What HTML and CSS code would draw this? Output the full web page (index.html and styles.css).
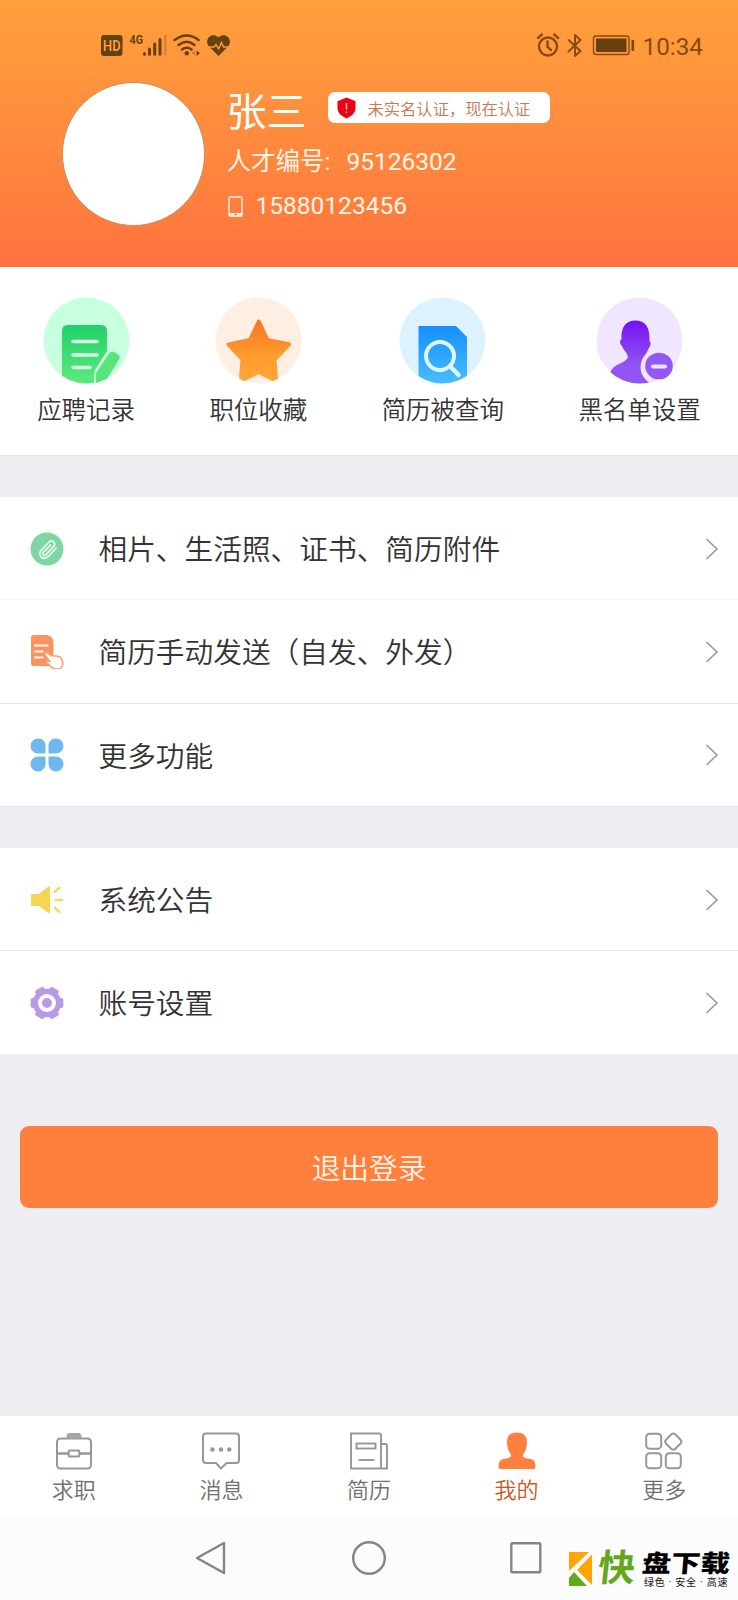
FILE: index.html
```html
<!DOCTYPE html>
<html lang="zh-CN">
<head>
<meta charset="utf-8">
<title>我的</title>
<link rel="stylesheet" href="styles.css">
</head>
<body>
<div class="screen">
  <header class="header">
    <div class="status">
      <svg class="status-left" width="134" height="28" viewBox="98 31 134 28">
        <rect x="101" y="35" width="21.5" height="21" rx="3" fill="#66400f"/>
        <text x="111.8" y="50.5" class="svg-hd" text-anchor="middle" textLength="17.500" lengthAdjust="spacingAndGlyphs">HD</text>
        <text x="129.5" y="43.5" class="svg-4g" textLength="13.5" lengthAdjust="spacingAndGlyphs">4G</text>
        <g stroke="#6b3f0e" stroke-width="3" stroke-linecap="round">
          <path d="M144.5 53.5v.8M149.5 49v5.3M154.7 44v10.3M160 39.5v14.8"/>
          <path d="M165.3 36v18.3" opacity=".25" stroke-width="2.5"/>
        </g>
        <g fill="none" stroke="#6b3f0e" stroke-width="2.5" stroke-linecap="round">
          <path d="M174.5 40Q187 31 198.500 40M178.500 45Q187 38.500 194.500 45M182 49.500Q187 46 191.500 49.500"/>
        </g>
        <circle cx="186.800" cy="53.300" r="2.300" fill="#6b3f0e"/>
        <path d="M196.500 50.500l3.500 2.500-3.500 3z" fill="#6b3f0e"/><path d="M195 50.500l-3.500 2.500 3.500 3z" fill="#6b3f0e" opacity=".3"/>
        <path d="M218.500 56l-10-10C203.500 38 213 32 218.500 37.500C224 32 233.500 38 228.500 46z" fill="#66400f"/>
        <path d="M207 47h7l2-2.500 2.500 4.500 3-6.500 2 4.500h6" fill="none" stroke="#ff9a3b" stroke-width="1.400"/>
      </svg>
      <div class="status-right">
        <svg width="100" height="28" viewBox="537 31 100 28">
          <g fill="none" stroke="#8a4a0c" stroke-width="2.400" stroke-linecap="round">
            <circle cx="549" cy="46.500" r="9"/><path d="M548.500 41.500v5.500l3.500 3M539 38l4-3.500M559.200 38l-4-3.500"/>
            <path d="M569.500 40l12 11-5.500 5V35l5.500 5-12 11.500" stroke-width="2" stroke-linejoin="round"/>
          </g>
          <rect x="594.500" y="36" width="35.500" height="18.500" rx="2.500" fill="none" stroke="#8a4a0c" stroke-width="1.400"/>
          <rect x="597" y="38.500" width="30.500" height="13.500" fill="#66400f"/>
          <rect x="632.500" y="40" width="2.600" height="11" rx="1" fill="#7a430c"/>
        </svg>
        <span class="time">10:34</span>
      </div>
    </div>
    <div class="profile">
      <div class="avatar"></div>
      <div class="info">
        <div class="name-line">
          <span class="name">张三</span>
          <div class="badge">
            <svg width="19" height="22" viewBox="0 0 19 22"><path d="M9.500.5l9 3.700v7.300q0 6-9 10Q.5 17.500.5 11.500V4.200z" fill="#ee0010"/><path d="M9.500 6v6.500M9.500 14.500v1.500" stroke="#ffc4bd" stroke-width="1.400"/></svg>
            <span>未实名认证，现在认证</span>
          </div>
        </div>
        <div class="line id"><span>人才编号:</span><span>95126302</span></div>
        <div class="line phone">
          <svg width="15" height="21" viewBox="0 0 15 21"><rect x="1" y="1" width="13" height="19" rx="1" fill="none" stroke="#fff3dc" stroke-width="1.400"/><path d="M1 17h13v3.500H1z" fill="#fff3dc"/><path d="M6 18.600h3" stroke="#ff7b3d" stroke-width="1.200"/></svg>
          <span>15880123456</span>
        </div>
      </div>
    </div>
  </header>

  <nav class="quick">
    <a class="quick-item">
      <svg width="87" height="87" viewBox="0 0 87 87">
        <defs>
          <linearGradient id="g1" x1="0" y1="0" x2="0" y2="1"><stop stop-color="#22d06b"/><stop offset="1" stop-color="#5eea7c"/></linearGradient>
          <clipPath id="cc"><circle cx="43.500" cy="43.500" r="43"/></clipPath>
        </defs>
        <circle cx="43.500" cy="43.500" r="43" fill="#c8ffdf"/>
        <g clip-path="url(#cc)">
          <path d="M25 28H58q6 0 6 6V54L52 73q-1 2-1 14H19V34q0-6 6-6z" fill="url(#g1)"/>
          <path d="M30 44.500H54M30 58H54M30 70.500H47" stroke="#d3ffe2" stroke-width="3.500" stroke-linecap="round"/>
        </g>
        <path d="M66.500 56q2-2.500 4.500-1l4.500 3q2 1.500.8 4L64 82l-11 4V76z" fill="#59e37c"/>
      </svg>
      <span>应聘记录</span>
    </a>
    <a class="quick-item">
      <svg width="87" height="87" viewBox="0 0 87 87">
        <defs><linearGradient id="g2" gradientUnits="userSpaceOnUse" x1="0" y1="23" x2="0" y2="84"><stop stop-color="#f67524"/><stop offset=".6" stop-color="#ff9d2c"/><stop offset="1" stop-color="#ffa43a"/></linearGradient></defs>
        <circle cx="43.500" cy="43.500" r="43" fill="#ffeee2"/>
        <path d="M43.800 24.500l8.700 18.500 21.500 4.300-14.500 15.200 1.500 18-3.500 1.500-13.700-7-14.300 7-3.500-2L27.500 62.500 13.500 47.500 35 43z" fill="url(#g2)" stroke="url(#g2)" stroke-width="4" stroke-linejoin="round"/>
      </svg>
      <span>职位收藏</span>
    </a>
    <a class="quick-item">
      <svg width="87" height="87" viewBox="0 0 87 87">
        <defs><linearGradient id="g3" x1="0" y1="0" x2="0" y2="1"><stop stop-color="#168efc"/><stop offset="1" stop-color="#48beff"/></linearGradient></defs>
        <circle cx="43.500" cy="43.500" r="43" fill="#dcf3ff"/>
        <g clip-path="url(#cc)">
          <path d="M19.500 29H57l11 11V87H19.500z" fill="url(#g3)"/>
          <circle cx="41" cy="59" r="14" fill="none" stroke="#e0f6ff" stroke-width="4"/>
          <path d="M51 69l8.500 9" stroke="#e0f6ff" stroke-width="4.500" stroke-linecap="round"/>
        </g>
      </svg>
      <span>简历被查询</span>
    </a>
    <a class="quick-item">
      <svg width="87" height="87" viewBox="0 0 87 87">
        <defs><linearGradient id="g4" x1="0" y1="0" x2="0" y2="1"><stop stop-color="#7612f5"/><stop offset=".7" stop-color="#9155f2"/></linearGradient></defs>
        <circle cx="43.500" cy="43.500" r="43" fill="#f0e6ff"/>
        <g clip-path="url(#cc)">
          <path d="M39.500 23.500C50 23.500 54 31 53.500 44Q56 46 53 51Q50 56 50 59Q50 64 60 67L58 88H24L14 77Q15 70 24 66.500Q32 63 32 59.500Q31 56 28 53L26.500 50Q22 45 25.500 42C25 31 29 23.500 39.500 23.500z" fill="url(#g4)"/>
          <circle cx="63" cy="70" r="18.500" fill="#f0e6ff"/>
        </g>
        <ellipse cx="63" cy="69" rx="13.800" ry="13.300" fill="#9158f3"/><path d="M57 69.500H69" stroke="#eee2ff" stroke-width="4.200" stroke-linecap="round"/>
      </svg>
      <span>黑名单设置</span>
    </a>
  </nav>

  <section class="menu">
    <a class="row faint">
      <svg class="row-icon" viewBox="0 0 34 34"><circle cx="17" cy="17" r="16.500" fill="#7fd6a5"/><path d="M26 16l-7.500 8.500q-4 3.500-7.500.5-3-3.500.5-7l7.500-8q2.500-2 4.700 0 2 2.300-.2 4.700l-7.500 8q-1.500 1.300-2.700.2-1.200-1.300.2-2.700l7-7.200" fill="none" stroke="#e4f8ec" stroke-width="1.800" stroke-linecap="round" stroke-linejoin="round"/></svg>
      <span class="row-text">相片、生活照、证书、简历附件</span>
      <svg class="chevron" viewBox="0 0 14 24"><path d="M1.500 2l10.500 10-10.500 10"/></svg>
    </a>
    <a class="row">
      <svg class="row-icon" viewBox="0 0 34 34"><path d="M3.500 0H17q6.500 1 6.500 8V29q0 2-2 2H3.500Q1 31 1 28.500V2.500Q1 0 3.500 0z" fill="#fb935f"/><path d="M5 10.500H17.500M5 16.500H12.500M5 22.500H12.500" stroke="#fff" stroke-width="2.200" stroke-linecap="round"/><path d="M17 17.500l4.500 3.500q1.500-1 3 .3 1.700-1.200 3.200.4 2-.6 3.200 1.300 2 3 2 6-.5 4.500-4.900 5-5 .3-7.500-2.500-1.300-2.300-3-3-2-1.500-.5-2.700l3 .7-5-6.500q-.5-2.500 2-2.500z" fill="#fff" stroke="#fb9f70" stroke-width="1.500" stroke-linejoin="round"/></svg>
      <span class="row-text">简历手动发送（自发、外发）</span>
      <svg class="chevron" viewBox="0 0 14 24"><path d="M1.500 2l10.500 10-10.500 10"/></svg>
    </a>
    <a class="row">
      <svg class="row-icon" viewBox="0 0 34 34" fill="#6fb7ed"><path d="M8 .5Q15.500.5 15.500 8V15.500H8A7.500 7.500 0 0 1 8 .5zM26 .5A7.500 7.500 0 0 1 26 15.500H18.500V8Q18.500.5 26 .5zM8 18.500H15.500V26A7.500 7.500 0 1 1 8 18.500zM18.500 18.500H26A7.500 7.500 0 1 1 18.500 26z"/></svg>
      <span class="row-text">更多功能</span>
      <svg class="chevron" viewBox="0 0 14 24"><path d="M1.500 2l10.500 10-10.500 10"/></svg>
    </a>
  </section>

  <section class="menu second">
    <a class="row">
      <svg class="row-icon" viewBox="0 0 34 34"><path d="M2 11H8.500L18.500 3.500q1.500-.8 1.500 1V29q0 1.800-1.500 1L8.500 23H2q-1 0-1-1V12q0-1 1-1z" fill="#f6d553"/><path d="M24.500 9l5-4.500M25.500 17H32M24.500 24.500l5 4.500" stroke="#f5d963" stroke-width="2.400" stroke-linecap="round"/></svg>
      <span class="row-text">系统公告</span>
      <svg class="chevron" viewBox="0 0 14 24"><path d="M1.500 2l10.500 10-10.500 10"/></svg>
    </a>
    <a class="row last">
      <svg class="row-icon" viewBox="0 0 34 34"><g fill="#b799e6"><circle cx="17" cy="17" r="14.300"/><rect x=".6" y="12" width="32.800" height="10" rx="2"/><rect x=".6" y="12" width="32.800" height="10" rx="2" transform="rotate(60 17 17)"/><rect x=".6" y="12" width="32.800" height="10" rx="2" transform="rotate(120 17 17)"/></g><circle cx="17" cy="17" r="7" fill="#b799e6" stroke="#fff" stroke-width="4"/></svg>
      <span class="row-text">账号设置</span>
      <svg class="chevron" viewBox="0 0 14 24"><path d="M1.500 2l10.500 10-10.500 10"/></svg>
    </a>
  </section>

  <button class="logout">退出登录</button>

  <footer class="bottom">
    <nav class="tabs">
      <a class="tab">
        <svg viewBox="0 0 38 38"><g fill="none" stroke="#979797" stroke-width="2"><rect x="2" y="6.500" width="34" height="30" rx="3.500"/><path d="M2 21.500H13.500M24.500 21.500H36" stroke-width="2.400"/><rect x="13.700" y="18.500" width="10.600" height="6" rx="1"/></g><path d="M11.500 6.500V4.500q0-3.500 3.500-3.500h8q3.500 0 3.500 3.500v2z" fill="#a5a5a5"/></svg>
        <span>求职</span>
      </a>
      <a class="tab">
        <svg viewBox="0 0 38 38"><path d="M4 1.500H34q3 0 3 3V28q0 3-3 3H24.500L19 36.500 14 31H4q-3 0-3-3V4.500q0-3 3-3z" fill="none" stroke="#979797" stroke-width="2"/><g fill="#979797"><circle cx="10.500" cy="17.500" r="2.200"/><circle cx="19" cy="17.500" r="2.200"/><circle cx="27.300" cy="17.500" r="2.200"/></g></svg>
        <span>消息</span>
      </a>
      <a class="tab">
        <svg viewBox="0 0 38 38"><g fill="none" stroke="#979797" stroke-width="1.900"><path d="M31 36.500H1V1.500h28.500q1.500 0 1.500 1.500V36.500M31 12h4.500q1.500 0 1.500 1.500v23h-6"/><rect x="6.500" y="11.500" width="19" height="5"/><path d="M8.500 28H24.500"/></g></svg>
        <span>简历</span>
      </a>
      <a class="tab active">
        <svg viewBox="0 0 38 38" fill="#ff7f3d"><path d="M19 .5Q29 .5 29 10q0 8-4 12.500v2q1 1.500 7.500 2.500 5 1 5 7v1q0 2-2 2H2.500q-2 0-2-2v-1q0-6 5-7Q12 26 13 24.500v-2Q9 18 9 10 9 .5 19 .5z"/></svg>
        <span>我的</span>
      </a>
      <a class="tab">
        <svg viewBox="0 0 38 38"><g fill="none" stroke="#979797" stroke-width="2"><rect x="1.200" y="1.800" width="15" height="15" rx="3.500"/><rect x="1.200" y="21.300" width="15" height="15" rx="3.500"/><rect x="20.800" y="21.300" width="15" height="15" rx="3.500"/><rect x="21.800" y="3.100" width="13" height="13" rx="3" transform="rotate(45 28.300 9.600)"/></g></svg>
        <span>更多</span>
      </a>
    </nav>
    <div class="system">
      <svg width="34" height="36" viewBox="0 0 34 36"><path d="M30 3V33L3 18z"/></svg>
      <svg width="36" height="36" viewBox="0 0 36 36"><circle cx="18" cy="18" r="15.800"/></svg>
      <svg width="34" height="36" viewBox="0 0 34 36"><rect x="2.300" y="3.300" width="29" height="29" rx="1"/></svg>
    </div>
    <div class="mark">
      <svg width="24" height="35" viewBox="0 0 24 35"><path d="M0 0H20L0 19zM23 2.500V33L8 18z" fill="#ffa505"/><path d="M0 26L5 20 18 34H0z" fill="#62a81a"/></svg>
      <span class="mark-green">快</span>
      <div class="mark-text">
        <span class="mark-title">盘下载</span>
        <span class="mark-sub">绿色 · 安全 · 高速</span>
      </div>
    </div>
  </footer>
</div>
</body>
</html>
```
FILE: styles.css
```css
* { box-sizing: border-box; }
body {
  margin: 0;
  font-family: Roboto, "Noto Sans CJK SC", sans-serif;
  font-weight: 400;
  color: #333;
}
svg { display: block; flex: none; }
.screen {
  width: 738px;
  height: 1600px;
  display: flex;
  flex-direction: column;
  background: #efeef3;
  overflow: hidden;
}
.header {
  height: 267px;
  flex: none;
  padding-top: 31px;
  background: linear-gradient(#ffa13b, #ff8a3e 52%, #ff733e);
}
.status {
  display: flex;
  justify-content: space-between;
  height: 28px;
  padding: 0 35px 0 98px;
}
.svg-hd { font: 500 14px Roboto, sans-serif; fill: #ffa24a; }
.svg-4g { font: 700 13px Roboto, sans-serif; fill: #6b3f0e; }
.status-right { display: flex; align-items: center; gap: 6px; }
.time { font-size: 24.3px; line-height: 28px; color: #8a4a0c; padding-top: 3px; }
.profile { display: flex; padding: 23px 0 0 61.5px; gap: 21.5px; }
.avatar {
  width: 143.5px;
  height: 143.5px;
  border-radius: 50%;
  background: #fff;
  border: 1px solid #c98a5c;
}
.info { padding-top: 4px; color: #fff6e6; }
.name-line { display: flex; align-items: flex-start; height: 54px; gap: 21.5px; }
.name { font-size: 40px; line-height: 50px; padding-top: 2px; color: #fff; }
.badge {
  display: flex;
  align-items: center;
  width: 222px;
  height: 31px;
  margin-top: 6px;
  padding-left: 9px;
  gap: 11.5px;
  border-radius: 7px;
  background: #fff;
  color: #cd7650;
  font-size: 16.3px;
  font-weight: 350;
  white-space: nowrap;
}
.line { display: flex; align-items: center; height: 44px; font-size: 24.5px; line-height: 44px; white-space: nowrap; }
.id { gap: 16px; }
.phone { gap: 13px; padding-left: 1px; }

.quick {
  display: flex;
  justify-content: space-around;
  height: 189px;
  flex: none;
  padding-top: 30px;
  background: #fff;
  border-bottom: 1px solid #e2e2e5;
}
.quick-item {
  display: flex;
  flex-direction: column;
  align-items: center;
  font-size: 24.5px;
  line-height: 30px;
  font-weight: 350;
  gap: 12px;
}

.menu { margin-top: 41px; background: #fff; flex: none; }
.row {
  display: flex;
  align-items: center;
  height: 103.300px;
  padding: 1px 19.500px 0 30px;
  border-bottom: 1px solid #e4e4e7;
}
.faint { border-color: #f5f5f5; }
.last { border-color: transparent; }
.row-icon { width: 34px; height: 34px; }
.row-text { flex: 1; padding: 3px 0 0 34.500px; font-size: 28.700px; line-height: 40px; font-weight: 350; }
.chevron { width: 14px; height: 24px; fill: none; stroke: #999; stroke-width: 1.600; }

.logout {
  flex: none;
  height: 82px;
  margin: 72px 20px 0;
  padding: 3px 0 0;
  border: 0;
  border-radius: 9px;
  background: #ff7f3d;
  color: #fff5e8;
  font: 350 28.700px/40px Roboto, "Noto Sans CJK SC", sans-serif;
}

.bottom { position: relative; margin-top: auto; flex: none; background: #fcfcfc; }
.tabs { display: flex; height: 101px; background: #fff; }
.tab {
  flex: 1;
  display: flex;
  flex-direction: column;
  align-items: center;
  padding-top: 16px;
  gap: 6px;
  font-size: 22px;
  line-height: 30px;
  font-weight: 350;
  color: #707070;
}
.tab svg { width: 38px; height: 38px; }
.tab.active { color: #c75a23; }
.system {
  display: flex;
  gap: 122.500px;
  height: 83px;
  padding: 23px 0 0 194px;
  fill: none;
  stroke: #858585;
  stroke-width: 2.400;
  stroke-linejoin: round;
}
.mark {
  position: absolute;
  left: 569px;
  top: 134px;
  display: flex;
  align-items: center;
  height: 38px;
  white-space: nowrap;
}
.mark-green {
  width: 45px;
  padding-left: 5px;
  font-size: 37px;
  line-height: 38px;
  font-weight: 700;
  color: #62a81a;
  transform: skewX(-6deg);
}
.mark-text { display: flex; flex-direction: column; padding: 2px 0 0 4px; color: #111; }
.mark-title {
  font-size: 24px;
  line-height: 25px;
  font-weight: 900;
  color: #000;
  transform: skewX(-5deg) scaleX(1.220);
  transform-origin: left center;
}
.mark-sub { font-size: 10px; line-height: 11px; padding-left: 2px; letter-spacing: .75px; }
```
